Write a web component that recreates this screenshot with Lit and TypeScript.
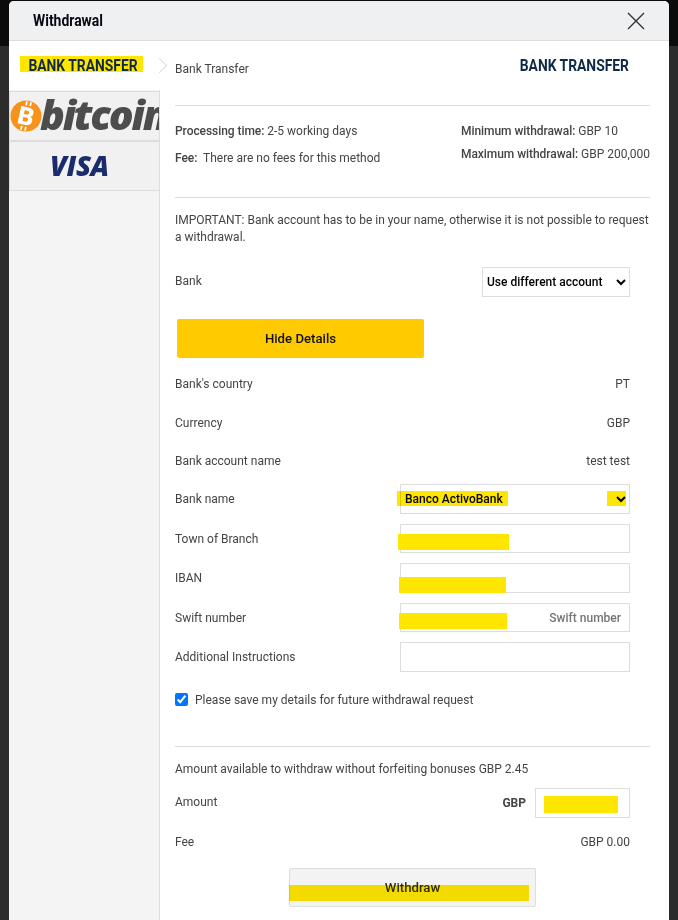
import { LitElement, html, css } from "lit";
import { customElement } from "lit/decorators.js";

@customElement("app-root")
export class AppRoot extends LitElement {
  static styles = css`
    :host {
      display: block;
      height: 920px;
      overflow: hidden;
      background: linear-gradient(#0b0b0b 46px, #2c2c2c 46px);
      font-family: Roboto, "Liberation Sans", sans-serif;
      font-size: 12px;
      color: #444;
    }
    * {
      box-sizing: border-box;
    }
    .modal {
      margin: 1px 9px 0;
      width: 660px;
      height: 919px;
      background: #fff;
      border-radius: 5px 5px 0 0;
      overflow: hidden;
      display: flex;
      flex-direction: column;
    }
    .head {
      height: 40px;
      flex: none;
      display: flex;
      align-items: center;
      justify-content: space-between;
      padding: 0 24px 0 24px;
      background: #eff0f2;
      border-bottom: 1px solid #ddd;
    }
    /* no condensed face installed, so the headings are squeezed Roboto */
    .narrow {
      display: inline-block;
      font-weight: 700;
      font-size: 17px;
      line-height: 18px;
      white-space: nowrap;
      transform: scaleX(0.815);
    }
    .title {
      color: #0a0a14;
      margin-bottom: 2px;
      transform-origin: left center;
      transform: scaleX(0.82);
    }
    .close {
      display: block;
    }
    .body {
      flex: 1;
      display: flex;
    }
    .side {
      width: 151px;
      flex: none;
      background: #f4f4f5;
      border-right: 1px solid #ddd;
      position: relative;
    }
    .tab {
      height: 50px;
      display: flex;
      align-items: center;
      justify-content: center;
      overflow: hidden;
      background: #f1f1f1;
      border: solid #ddd;
      border-width: 1px 0 1px 1px;
    }
    .tab.active {
      background: #fff;
      border: 0;
      height: 49px;
      width: 151px;
      margin-bottom: 1px;
      position: relative;
      color: #0e2a47;
      padding: 0 3px 2px 0;
    }
    .tab svg {
      display: block;
      flex: none;
    }
    .notch {
      position: absolute;
      left: 145px;
      top: 19px;
      width: 11px;
      height: 11px;
      background: #fff;
      border: solid #ddd;
      border-width: 1px 1px 0 0;
      transform: rotate(45deg);
    }
    .main {
      flex: 1;
      padding: 0 19px 0 15px;
      position: relative;
    }
    hr {
      border: 0;
      border-top: 1px solid #ddd;
      margin: 0;
    }
    .method {
      height: 64px;
      display: flex;
      justify-content: space-between;
      align-items: flex-start;
      padding: 15px 21px 0 0;
    }
    .method .name {
      padding-top: 6px;
    }
    .method .logo {
      color: #0e2a47;
      transform-origin: right center;
    }
    .info {
      height: 91px;
      display: flex;
      justify-content: space-between;
      padding-top: 18px;
    }
    .info b {
      font-weight: 500;
      letter-spacing: -0.06px;
    }
    .info p {
      margin: 0;
      line-height: 14px;
    }
    .col-l p + p {
      margin-top: 13px;
    }
    .col-r p + p {
      margin-top: 9px;
    }
    .note {
      margin: 14px 0 0;
      line-height: 17px;
      height: 55px;
    }
    .row {
      display: flex;
      align-items: center;
      justify-content: space-between;
      margin-right: 20px;
      height: 30px;
    }
    .row.tall {
      height: 38.4px;
    }
    .row.field {
      height: 29.5px;
      margin-bottom: 10px;
    }
    .row.field.first {
      margin-top: 4.3px;
    }
    select,
    input[type="text"] {
      font: 500 12px Roboto, sans-serif;
      color: #000;
      background: #fff;
      border: 1px solid #ddd;
      border-radius: 0;
      height: 100%;
      outline: none;
    }
    .bank-select {
      width: 148px;
      padding-left: 0;
    }
    .row.field select,
    .row.field input {
      width: 230px;
    }
    input[type="text"] {
      padding: 0 8px;
      text-align: right;
    }
    input::placeholder {
      color: #757575;
    }
    .label {
      position: relative;
      top: -1px;
    }
    .hide {
      display: block;
      width: 247px;
      height: 39px;
      margin: 22px 0 7px 2px;
      background: #ffcb00;
      border: 0;
      border-radius: 2px;
      font: 500 13.2px Roboto, sans-serif;
      color: #111;
    }
    .check {
      display: flex;
      align-items: center;
      gap: 7px;
      height: 16px;
      margin: 20px 0 38px;
    }
    .check input {
      margin: 0;
      width: 13px;
      height: 13px;
    }
    .avail {
      margin: 14px 0 11px;
      line-height: 16px;
    }
    .amount input {
      width: 95px;
    }
    .amount .cur {
      display: flex;
      align-items: center;
      gap: 9px;
      height: 100%;
      font-weight: 700;
    }
    .row.fee {
      margin-top: 9px;
    }
    .withdraw {
      display: block;
      width: 247px;
      height: 39px;
      margin: 11px 0 0 114px;
      background: #f3f3f3;
      border: 1px solid #ddd;
      border-radius: 2px;
      font: 500 13.2px Roboto, sans-serif;
      color: #333;
    }
    /* redaction marks lying over the form */
    .mark {
      position: absolute;
      background: #ffe600;
    }
    .mark.under {
      mix-blend-mode: multiply;
    }
  `;

  render() {
    return html`
      <div class="modal">
        <div class="head">
          <div class="narrow title">Withdrawal</div>
          <svg class="close" width="18" height="18" viewBox="0 0 18 18">
            <path d="M1 1 L17 17 M17 1 L1 17" stroke="#333" stroke-width="1.4" fill="none" />
          </svg>
        </div>
        <div class="body">
          <div class="side">
            <div class="tab active">
              <span class="mark under" style="left:11px;top:15px;width:123px;height:16px"></span>
              <span class="narrow">BANK TRANSFER</span>
            </div>
            <div class="tab">
              <svg width="150" height="48" viewBox="0 0 150 48">
                <circle cx="16" cy="24" r="15.5" fill="#f7931a" />
                <g transform="rotate(12 16 24)" fill="#fff" font-family="Roboto, sans-serif" font-weight="900">
                  <text x="16" y="33" font-size="25" text-anchor="middle">B</text>
                  <path d="M13 9.5h1.8v4H13z M17.2 9.5h1.8v4H17.2z M13 34.5h1.8v4H13z M17.2 34.5h1.8v4H17.2z" />
                </g>
                <text x="30" y="38" font-family="Open Sans, sans-serif" font-weight="800" font-style="italic" font-size="41" letter-spacing="-2.2" fill="#4d4d4d">bitcoin</text>
              </svg>
            </div>
            <div class="tab">
              <svg width="80" height="34" viewBox="0 0 80 34">
                <text x="5" y="27" font-family="Open Sans, sans-serif" font-weight="800" font-style="italic" font-size="27.5" letter-spacing="-0.4" fill="#1a2c6b">VISA</text>
              </svg>
            </div>
            <div class="notch"></div>
          </div>
          <div class="main">
            <div class="method">
              <div class="name">Bank Transfer</div>
              <div class="narrow logo">BANK TRANSFER</div>
            </div>
            <hr />
            <div class="info">
              <div class="col-l">
                <p><b>Processing time:</b> 2-5 working days</p>
                <p><b>Fee:</b>&nbsp; There are no fees for this method</p>
              </div>
              <div class="col-r">
                <p><b>Minimum withdrawal:</b> GBP 10</p>
                <p><b>Maximum withdrawal:</b> GBP 200,000</p>
              </div>
            </div>
            <hr />
            <p class="note">
              IMPORTANT: Bank account has to be in your name, otherwise it is not possible to
              request a withdrawal.
            </p>
            <div class="row">
              <span class="label">Bank</span>
              <select class="bank-select"><option>Use different account</option></select>
            </div>
            <button class="hide">Hide Details</button>
            <div class="row tall"><span>Bank's country</span><span>PT</span></div>
            <div class="row tall"><span>Currency</span><span>GBP</span></div>
            <div class="row tall"><span>Bank account name</span><span>test test</span></div>
            <div class="row field first">
              <span>Bank name</span>
              <select><option>Banco ActivoBank</option></select>
            </div>
            <div class="row field">
              <span>Town of Branch</span><input type="text" />
            </div>
            <div class="row field"><span>IBAN</span><input type="text" /></div>
            <div class="row field">
              <span>Swift number</span><input type="text" placeholder="Swift number" />
            </div>
            <div class="row field">
              <span>Additional Instructions</span><input type="text" />
            </div>
            <label class="check"><input type="checkbox" checked />Please save my details for future withdrawal request</label>
            <hr />
            <div class="avail">Amount available to withdraw without forfeiting bonuses GBP 2.45</div>
            <div class="row amount">
              <span class="label">Amount</span>
              <span class="cur">GBP <input type="text" /></span>
            </div>
            <div class="row fee"><span>Fee</span><span>GBP 0.00</span></div>
            <button class="withdraw">Withdraw</button>

            <span class="mark under" style="left:237px;top:450px;width:111px;height:15px"></span>
            <span class="mark under" style="left:447px;top:450px;width:19px;height:15px"></span>
            <span class="mark" style="left:238px;top:493px;width:111px;height:16px"></span>
            <span class="mark" style="left:239px;top:536px;width:107px;height:16px"></span>
            <span class="mark" style="left:239px;top:572px;width:108px;height:16px"></span>
            <span class="mark" style="left:384px;top:755px;width:74px;height:17px"></span>
            <span class="mark under" style="left:129px;top:844px;width:240px;height:16px"></span>
          </div>
        </div>
      </div>
    `;
  }
}
